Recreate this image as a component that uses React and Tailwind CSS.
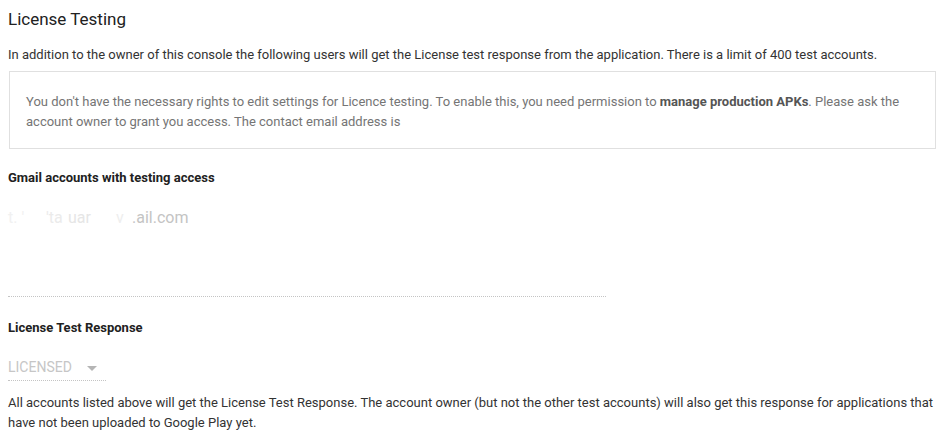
export default function App() {
  return (
    <main className="min-h-screen w-full bg-white font-['Roboto',sans-serif] text-[13px] text-[#212121]">
      <div className="flex flex-col px-2 pt-[7px]">
        <h1 className="text-[17px] leading-[24px] font-normal">License Testing</h1>
        <p className="mt-[14px] leading-[20px] text-[#333]">
          In addition to the owner of this console the following users will get the License test response from the application. There is a limit of 400 test accounts.
        </p>

        <div className="mt-[6px] mr-[5px] ml-px border border-[#e0e0e0] px-4 pt-[15px] pb-[16px] leading-[20px] text-[#757575]">
          <p className="pt-[5px]">
            You don't have the necessary rights to edit settings for Licence testing. To enable this, you need permission to{' '}
            <span className="font-bold text-[#555]">manage production APKs</span>. Please ask the account owner to grant you access. The contact email address is
          </p>
        </div>

        <h2 className="mt-[19px] font-bold leading-[20px]">Gmail accounts with testing access</h2>
        <div className="mt-[19px] flex h-[22px] whitespace-pre text-[16px] leading-[22px] text-[#c4c4c4]">
          <span className="w-[30px] text-[#f1f1f1]">t. '</span>
          <span className="w-[30px] text-[#ebebeb]">  'ta</span>
          <span className="w-[40px] text-[#e6e6e6]">uar</span>
          <span className="w-[24px] text-[#eeeeee]">  v</span>
          <span>.ail.com</span>
        </div>
        <div className="mt-[67px] w-[598px] border-b border-dotted border-[#c4c4c4]" />

        <h2 className="mt-[21px] font-bold leading-[20px]">License Test Response</h2>
        <div className="mt-[19px] flex w-[98px] items-center border-b border-dotted border-[#c4c4c4] pb-[3px]">
          <span className="text-[14px] leading-[20px] text-[#c6c6c6]">LICENSED</span>
          <svg className="ml-[15px] mt-[2px]" width="10" height="5" viewBox="0 0 10 5">
            <path d="M0 0h10L5 5z" fill="#b5b5b5" />
          </svg>
        </div>
        <p className="mt-[12px] leading-[20px] text-[#333]">
          All accounts listed above will get the License Test Response. The account owner (but not the other test accounts) will also get this response for applications that have not been uploaded to Google Play yet.
        </p>
      </div>
    </main>
  );
}
